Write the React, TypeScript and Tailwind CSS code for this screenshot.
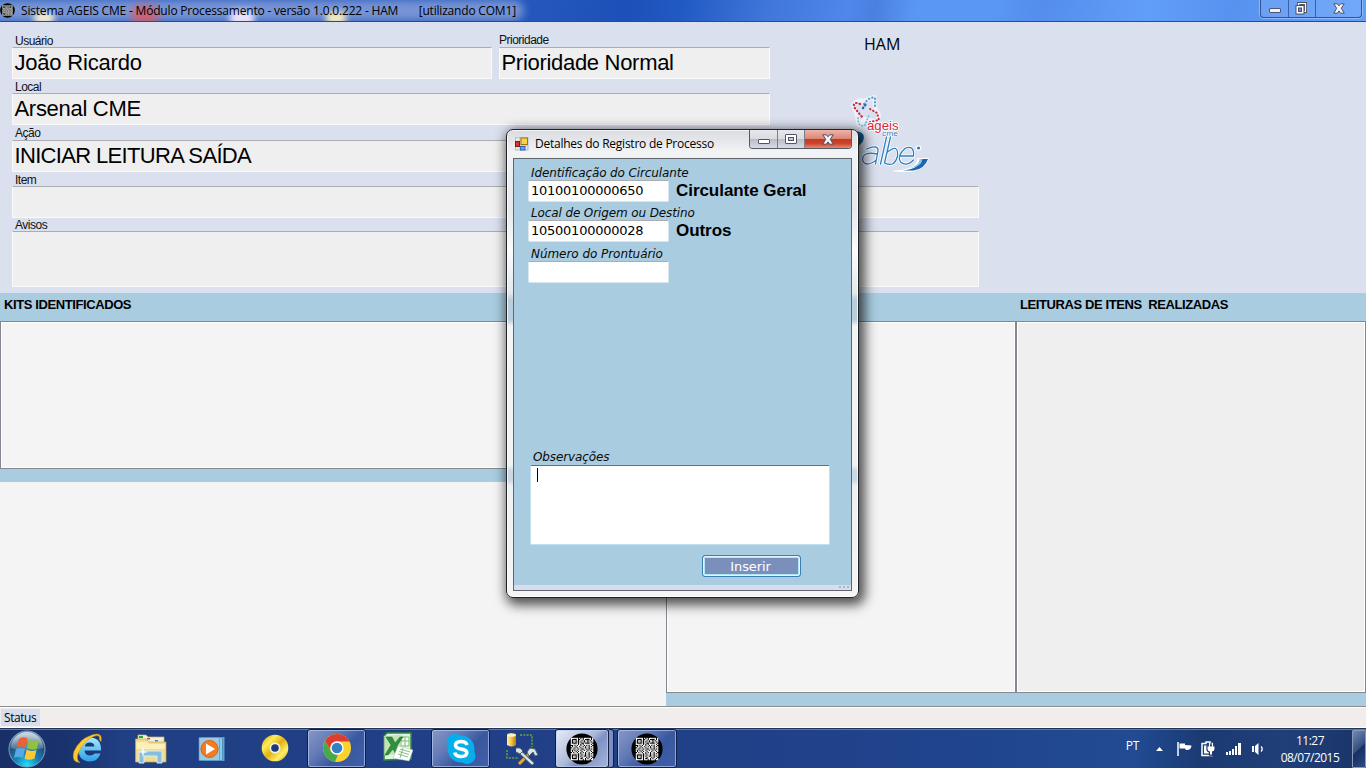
import React from "react";

const QR_ROWS = [
  "1111110101011111101",
  "1000010011010000101",
  "1011010110101101011",
  "1011010101101101101",
  "1000010110010000110",
  "1111110101011111101",
  "0010101101101010110",
  "1011011011010110101",
  "0110101101110110111",
  "1101110110011010101",
  "1010101101101101011",
  "1011010110111011101",
  "0101101101010110110",
  "1111110101110110101",
  "1000010110110110111",
  "1011010101100110101",
  "1011010110111010110",
  "1000010100110101101",
  "1111110111010111011",
];

function QrIcon({ className }: { className: string }) {
  return (
    <svg viewBox="0 0 32 32" className={className}>
      <circle cx="16" cy="16" r="15.6" fill="#000" />
      {QR_ROWS.map((row, y) =>
        row.split("").map((c, x) =>
          c === "1" ? <rect key={`${x}-${y}`} x={4.8 + x * 1.18} y={4.8 + y * 1.18} width="1.25" height="1.25" fill="#fff" /> : null,
        ),
      )}
    </svg>
  );
}

type FieldProps = { label: string; value?: string; className: string; boxClass?: string; valueClass?: string; labelClass?: string };

function Field({ label, value, className, boxClass = "h-8", valueClass = "", labelClass = "pt-px pl-[3px]" }: FieldProps) {
  return (
    <div className={`flex flex-col ${className}`}>
      <div className={`h-[13px] font-['Liberation_Sans'] text-[12px] leading-[13px] tracking-[-0.5px] text-[#111] ${labelClass}`}>{label}</div>
      <div className={`flex items-center rounded-[1px] border border-[#fafafc] border-t-[#abadb3] bg-[#efefef] pl-[1.5px] font-['Liberation_Sans'] text-[22px] leading-none text-black ${boxClass}`}>
        <span className={valueClass}>{value}</span>
      </div>
    </div>
  );
}

function CloseGlyph({ className }: { className: string }) {
  return (
    <svg viewBox="0 0 12 11" className={className}>
      <path d="M.8 .8H4.300L6 2.800 7.700 .8H11.200L8.300 5.300 11.200 10.200H7.700L6 7.900 4.300 10.200H.8L3.700 5.300Z" fill="#f4f4f6" stroke="#4b5064" strokeWidth="1" />
    </svg>
  );
}

function TitleBar() {
  return (
    <header className="relative flex h-[22px] shrink-0 justify-between overflow-hidden border-b border-[#2f4a86] bg-[linear-gradient(100deg,#2f5fc0_0,#2456bb_40%,#1d50b8_46%,#225ac4_50%,#3f76d8_56%,#4f88ea_62%,#4a80e0_64%,#5a97f5_67%,#5a96f4_73%,#548ded_76%,#619ef9_84%,#5792f0_90%,#639ff8_100%)]">
      <div className="absolute -left-2 top-0 h-[21px] w-[532px] rounded-r-full bg-[#8aa3dc] opacity-80 blur-[4px]" />
      <div className="absolute left-[34px] top-[12px] h-3 w-5 rounded bg-[#f5edd2] blur-[3px]" />
      <div className="absolute left-[131px] top-[5px] h-5 w-7 rounded-full bg-[#e05a5e] opacity-80 blur-[4px]" />
      <div className="absolute left-[230px] top-[10px] h-4 w-6 rounded bg-[#e8e2f8] blur-[3px]" />
      <div className="absolute left-[326px] top-[12px] h-3 w-5 rounded bg-[#f7efbf] blur-[3px]" />
      <div className="relative flex items-center">
        <QrIcon className="size-[15px]" />
        <span className="ml-[6px] whitespace-pre font-['Open_Sans'] text-[12px] leading-5 tracking-[-0.19px] text-black">Sistema AGEIS CME - Módulo Processamento - versão 1.0.0.222 - HAM</span>
        <span className="ml-[20.5px] whitespace-pre font-['Open_Sans'] text-[12px] leading-5 tracking-[-0.19px] text-black">[utilizando COM1]</span>
      </div>
      <div className="relative mr-[4px] flex h-[18px] w-[102px] rounded-b-[4px] border border-t-0 border-[#33548f] bg-white/10 shadow-[0_0_0_1px_rgba(190,215,255,.5)]">
        <div className="flex w-[28px] items-end justify-center border-r border-[#3a62ab] pb-[4px]">
          <div className="h-[5px] w-[12px] rounded-[1px] border border-[#4c5573] bg-[#f1f1f5]" />
        </div>
        <div className="flex w-[27px] justify-center border-r border-[#3a62ab] pr-[2px] pt-[1.5px]">
          <svg viewBox="0 0 12 13" className="h-[13px] w-[12px]">
            <path d="M3.500 1.500H10.500V9.500H3.500Z" fill="none" stroke="#4b5064" strokeWidth="3" />
            <path d="M3.500 1.500H10.500V9.500H3.500Z" fill="none" stroke="#fff" strokeWidth="1.200" />
            <rect x="1" y="3.500" width="8" height="8.500" fill="#fff" stroke="#4b5064" />
            <rect x="3.500" y="6" width="3" height="3.500" fill="#5d91e8" stroke="#4b5064" />
          </svg>
        </div>
        <div className="flex flex-1 justify-center pt-[2.5px]">
          <CloseGlyph className="h-[11px] w-[12px]" />
        </div>
      </div>
    </header>
  );
}

function BrandLogo() {
  return (
    <svg viewBox="0 0 86 78" className="h-[78px] w-[86px]">
      <g fill="none" stroke="#fff" strokeWidth="4.500" strokeLinejoin="round" opacity=".55">
        <path d="M7 10Q12 4 18 6L28 2 29 13 33 20 31 27 19 24 13 30 11 20Z" />
      </g>
      <g fill="none" strokeLinecap="round">
        <path d="M14 9Q7 6 8 12L15 21 18 23" stroke="#d4283a" strokeWidth="2.200" strokeDasharray=".5 3" />
        <path d="M18 9Q24 1 29 3V11" stroke="#4f9cce" strokeWidth="2" strokeDasharray=".5 3" />
        <path d="M24 14L31 18 33 25 24 27" stroke="#d4283a" strokeWidth="2" strokeDasharray=".5 3" />
        <path d="M12 23Q12 33 19 30L23 20" stroke="#7bbbdc" strokeWidth="1.800" strokeDasharray=".5 2.600" />
        <path d="M17 13L20 9" stroke="#2c62ac" strokeWidth="2.400" strokeDasharray=".5 3" />
      </g>
      <text x="21" y="34.500" fontFamily="Liberation Sans" fontSize="12" textLength="31.500" lengthAdjust="spacingAndGlyphs" fill="#d4283a" stroke="#fff" strokeWidth="1.600" paintOrder="stroke">ageis</text>
      <text x="36" y="41" fontFamily="Liberation Sans" fontSize="6.500" textLength="16" lengthAdjust="spacingAndGlyphs" fill="#3f77b8" stroke="#fff" strokeWidth="1" paintOrder="stroke">cme</text>
      <g transform="translate(2.5 -1)">
        <path d="M6 37Q19 38 14 48L8 54" fill="#145c9c" />
        <g fill="none" strokeLinecap="round">
          <g stroke="#fff" strokeWidth="3">
            <path d="M18 55Q30 50 29.500 57L27 70M29 60Q14 57 14 66Q17 74 28 66M38 43L32 70M42 43L36 69Q46 74 49 62Q50 49 39 58M52 62H65Q66 51 57 54Q48 62 52 68Q58 73 65 66" />
          </g>
          <g stroke="#2d7fc0" strokeWidth="1.300">
            <path d="M18 55Q30 50 29.500 57L27 70M29 60Q14 57 14 66Q17 74 28 66M38 43L32 70M42 43L36 69Q46 74 49 62Q50 49 39 58M52 62H65Q66 51 57 54Q48 62 52 68Q58 73 65 66" />
          </g>
        </g>
        <circle cx="70" cy="54" r="2.800" fill="#fff" />
        <circle cx="70" cy="54" r="1.500" fill="#2873b8" />
        <path d="M45 76.500Q68 76 69 64H80.500Q76 78 57 78L45 77.500Z" fill="#fff" />
        <path d="M54 76.500Q71 75 73 65H79.500Q76 75 65 76.500Z" fill="#1b64ae" />
        <path d="M62 74Q71 71 71 65H74Q73 73 62 74" fill="#8fc4e6" />
      </g>
    </svg>
  );
}

function Dialog() {
  return (
    <section className="absolute left-[506px] top-[129px] flex h-[469px] w-[353px] flex-col rounded-[7px] border border-[#202226] bg-[linear-gradient(180deg,#d9dbe0_0,#f2f3f5_22px,#e6e8eb_80px,#fbfbfc_120px,#e4e8ec_163px,#b9cddd_170px,#b9cddd_190px,#f3f4f4_196px,#f1f3f3_335px,#c9d8e2_341px,#c9d8e2_350px,#eef1f1_356px,#f4f5f4_100%)] px-[6px] pb-[6px] shadow-[inset_0_0_0_1px_rgba(255,255,255,.75),3px_4px_12px_3px_rgba(0,0,0,.68)]">
      <div className="flex h-[28px] shrink-0 justify-between pl-[2px]">
        <div className="flex h-[28px] items-center">
          <svg viewBox="0 0 14 14" className="size-[14px]">
            <rect x=".5" y=".5" width="12.500" height="12.500" fill="#e5e8ee" stroke="#b7bdc9" />
            <path d="M5 1V13M1 9H13" stroke="#b7bdc9" />
            <rect x=".5" y="4.500" width="4" height="5" fill="#d3352b" stroke="#8e1914" />
            <rect x="6" y="1" width="6.500" height="6.500" fill="#fbd34b" stroke="#a27409" />
            <rect x="5.500" y="9.500" width="4.500" height="3.500" fill="#67a0ef" stroke="#3065b9" />
          </svg>
          <span className="ml-[6px] whitespace-nowrap font-['Open_Sans'] text-[12px] leading-5 tracking-[-0.24px] text-black">Detalhes do Registro de Processo</span>
        </div>
        <div className="flex h-[19px] w-[103px] overflow-hidden rounded-b-[4px] border border-t-0 border-[#565a65]">
          <div className="flex w-[28px] items-center justify-center border-r border-[#7b7f8a] bg-[linear-gradient(180deg,#e7e8ec_0,#d9dbe0_48%,#b9bcc4_50%,#dadce2_100%)] pt-[5px]">
            <div className="h-[5px] w-[12px] rounded-[1px] border border-[#505466] bg-white" />
          </div>
          <div className="flex w-[27px] items-center justify-center border-r border-[#7b7f8a] bg-[linear-gradient(180deg,#e7e8ec_0,#d9dbe0_48%,#b9bcc4_50%,#dadce2_100%)]">
            <div className="flex h-[10px] w-[12px] items-center justify-center rounded-[1px] border border-[#505466] bg-white">
              <div className="h-[4px] w-[6px] border border-[#505466] bg-[#c8cad0]" />
            </div>
          </div>
          <div className="flex flex-1 items-center justify-center bg-[linear-gradient(180deg,#eeb3a8_0,#dd8677_48%,#c43820_50%,#cc452c_75%,#e48b73_100%)]">
            <CloseGlyph className="h-[11px] w-[12px]" />
          </div>
        </div>
      </div>
      <div className="flex flex-1 flex-col border border-[#60666e] bg-[#a9cce0]">
        <div className="flex flex-1 flex-col pl-[14px] font-['DejaVu_Sans']">
          <div className="mt-[5px] h-[16px] pl-[3px] text-[12px] italic leading-[18px] tracking-[-0.12px] text-[#0b0b0b]">Identificação do Circulante</div>
          <div className="flex items-center">
            <div className="flex h-[22px] w-[141px] items-center rounded-[2px] border border-[#d9e6f0] border-t-[#abadb3] bg-white pl-[2px] text-[13px] tracking-[-0.25px] text-black">10100100000650</div>
            <strong className="ml-[7px] font-['Liberation_Sans'] text-[17px] leading-5 tracking-[-0.05px] text-black">Circulante Geral</strong>
          </div>
          <div className="mt-[2px] h-[16px] pl-[3px] text-[12px] italic leading-[18px] tracking-[-0.12px] text-[#0b0b0b]">Local de Origem ou Destino</div>
          <div className="flex items-center">
            <div className="flex h-[22px] w-[141px] items-center rounded-[2px] border border-[#d9e6f0] border-t-[#abadb3] bg-white pl-[2px] text-[13px] tracking-[-0.25px] text-black">10500100000028</div>
            <strong className="ml-[7px] font-['Liberation_Sans'] text-[17px] leading-5 tracking-[-0.05px] text-black">Outros</strong>
          </div>
          <div className="mt-[3px] h-[16px] pl-[3px] text-[12px] italic leading-[18px] tracking-[-0.05px] text-[#0b0b0b]">Número do Prontuário</div>
          <div className="h-[22px] w-[141px] rounded-[2px] border border-[#d9e6f0] border-t-[#abadb3] bg-white" />
          <div className="mt-auto h-[17px] pl-[5px] text-[12px] italic leading-[18px] tracking-[-0.12px] text-[#0b0b0b]">Observações</div>
          <div className="ml-[2px] h-[80px] w-[300px] rounded-[2px] border border-[#c2dff0] border-t-[#3d7bad] bg-white pl-[6px] pt-[2px]">
            <div className="h-[14px] w-px bg-black" />
          </div>
          <div className="mb-[8px] ml-[174px] mt-[10px] flex h-[22px] w-[99px] items-center justify-center rounded-[3px] border border-[#3c7fb1] bg-[#7b8fbc] pr-[2px] pt-[2px] text-[13px] tracking-[-0.1px] text-white shadow-[inset_0_0_0_1px_#e2f5ff,inset_0_0_0_2px_#b4e4f8]">Inserir</div>
        </div>
        <div className="flex h-[5px] justify-end gap-[2px] bg-[#d7dded] pr-[2px] pt-[1px]">
          <i className="size-[2px] bg-[#b3b5bb]" />
          <i className="size-[2px] bg-[#b3b5bb]" />
          <i className="size-[2px] bg-[#b3b5bb]" />
        </div>
      </div>
    </section>
  );
}

function StartOrb() {
  return (
    <svg viewBox="0 0 38 38" className="size-[38px]">
      <defs>
        <radialGradient id="orb" cx=".5" cy=".95" r=".85">
          <stop offset="0" stopColor="#20e2ff" />
          <stop offset=".4" stopColor="#1482b5" />
          <stop offset=".75" stopColor="#234f78" />
          <stop offset="1" stopColor="#6e8eb0" />
        </radialGradient>
        <linearGradient id="shine" x2="0" y2="1">
          <stop stopColor="#fff" stopOpacity=".65" />
          <stop offset="1" stopColor="#fff" stopOpacity=".15" />
        </linearGradient>
      </defs>
      <circle cx="19" cy="19" r="18" fill="url(#orb)" stroke="#7e9fbe" />
      <path d="M3 18A16 16 0 0 1 35 18Q19 24 3 18Z" fill="url(#shine)" />
      <path d="M11 9Q15 6 19.500 8.500L17.500 17.500Q13 15.500 8.500 17.500Z" fill="#ee6133" />
      <path d="M21 9.500Q26 12 31 9.500L29 18.500Q24 20.500 19 18Z" fill="#8fc33f" />
      <path d="M8 19Q12.500 17 17 19L15 28Q10.500 26 6 28Z" fill="#56a9e6" />
      <path d="M18.500 19.800Q23 22 28.500 20L26.500 28.500Q21 31 16.500 28.800Z" fill="#fcc934" />
    </svg>
  );
}

function IeIcon() {
  return (
    <svg viewBox="0 0 32 32" className="mb-[2px] size-[32px]">
      <defs>
        <linearGradient id="ie" x2="0" y2="1"><stop stopColor="#a6e8ff" /><stop offset="1" stopColor="#2ba0e6" /></linearGradient>
      </defs>
      <path d="M29 18.500H12.500Q13 23.500 18 23.500 21.500 23.500 22.500 21.500H28.500Q26 29.500 17.500 29.500 6.500 29 6.500 17.500 7 6 18 5.500 29.500 6 29 18.500ZM12.700 14.500H22.500Q22 10.500 17.700 10.500 13.500 10.500 12.700 14.500Z" fill="url(#ie)" />
      <path d="M29 9.500Q31 -.5 20 3 7.500 7 2 19.500 -1 30.500 8 30.500 3.500 28 6.500 20.500 11.500 9 21.500 4.500 28.500 1.500 27.500 8Z" fill="#fcc931" stroke="#d9960b" strokeWidth=".5" />
    </svg>
  );
}

function ExplorerIcon() {
  return (
    <svg viewBox="0 0 34 30" className="h-[30px] w-[34px]">
      <path d="M4 1H12L14 3H30V9H4Z" fill="#f5efd1" stroke="#cfb668" strokeWidth=".7" />
      <path d="M5 2H9V4H5Z" fill="#26a72c" /><path d="M13 4H16V5.500H13Z" fill="#d94a2e" /><path d="M21 6H24V7.500H21Z" fill="#2b8be0" />
      <path d="M1.500 5H12L15 8H32V28H1.500Z" fill="#f2dc8b" stroke="#c9a74d" strokeWidth=".7" />
      <path d="M2.500 8H13L15 10H31V15H2.500Z" fill="#fbf0b9" />
      <path d="M5 29V18Q5 17 6 17H27Q28 17 28 18V29H23V22H10V29Z" fill="#86bedd" stroke="#d4edfa" />
      <path d="M9 12L10 17 14 18 10 19 9 24 8 19 4 18 8 17Z" fill="#fff" opacity=".9" />
    </svg>
  );
}

function MediaIcon() {
  return (
    <svg viewBox="0 0 28 26" className="h-[26px] w-[28px]">
      <path d="M5 1H26.500V25H5Z" fill="#5ba8d2" />
      <path d="M3 1.500H24.500V24.500H3Z" fill="#8dc8e6" stroke="#347fb0" strokeWidth=".6" />
      <path d="M1 1.500H21.500V24.500H1Z" fill="#9ac9e5" stroke="#4b8eb8" strokeWidth=".6" />
      <circle cx="11.500" cy="13" r="8.500" fill="#f47c20" stroke="#e35d0c" />
      <path d="M8 7.500L17 13 8 18.500Z" fill="#fff" />
    </svg>
  );
}

function DiscIcon() {
  return (
    <svg viewBox="0 0 28 28" className="mb-[2px] size-[28px]">
      <defs><linearGradient id="disc" x2="1" y2="1"><stop stopColor="#c99a08" /><stop offset=".28" stopColor="#ffec5b" /><stop offset=".5" stopColor="#e0b111" /><stop offset=".75" stopColor="#fff069" /><stop offset="1" stopColor="#bd8e06" /></linearGradient></defs>
      <circle cx="14" cy="14" r="13.300" fill="url(#disc)" />
      <circle cx="14" cy="14" r="5.500" fill="#f4f2da" />
      <circle cx="14" cy="14" r="3.800" fill="#1d397b" />
    </svg>
  );
}

function ChromeIcon() {
  return (
    <svg viewBox="0 0 30 30" className="mb-px size-[30px]">
      <circle cx="15" cy="15" r="14" fill="#fbd32e" />
      <path d="M3 8A14 14 0 0 1 27.500 8.500H15A6.500 6.500 0 0 0 9 18Z" fill="#de3c30" />
      <path d="M3 8L9 18.500Q11.500 22 16 21.500L13 29A14 14 0 0 1 3 8Z" fill="#48a94c" />
      <circle cx="15" cy="15" r="6.700" fill="#fff" />
      <circle cx="15" cy="15" r="5.300" fill="#347fc8" />
    </svg>
  );
}

function ExcelIcon() {
  return (
    <svg viewBox="0 0 30 30" className="mb-[3px] size-[30px]">
      <path d="M4 1H28V27L1 28V4Z" fill="#e1f2df" stroke="#2b8d39" strokeWidth="1.500" />
      <path d="M18 5H26V14H18ZM18 9H26M22 5V14" fill="#f7fcf5" stroke="#7cba76" />
      <path d="M1 4L18 3V22L1 23Z" fill="#b8dca9" opacity=".7" />
      <path d="M3 5H9L12 11 17 5H20L14 14 19 23H13L10 17 5 23H2L8 13Z" fill="#2d923b" stroke="#196827" strokeWidth=".5" />
      <path d="M15 14L30 18 26 29 10 26Z" fill="#fff" stroke="#a8cdae" strokeWidth=".5" />
      <path d="M17 17L27 20M16 19.500L26 22.500M15 22L25 25M20 16L17 26" stroke="#69ab75" strokeWidth=".8" />
    </svg>
  );
}

function SkypeIcon() {
  return (
    <svg viewBox="0 0 32 32" className="size-[32px]">
      <circle cx="10" cy="9.500" r="8.500" fill="#00aff0" />
      <circle cx="22" cy="22.500" r="8.500" fill="#00aff0" />
      <circle cx="16" cy="16" r="13.500" fill="#08aeea" />
      <path d="M22 12Q21 8.500 16 8.500 10.500 8.700 10.500 12.300 10.700 15 16 16 22 17 21.800 20 21.500 23.500 16 23.500 10.500 23.500 9.800 19.500" fill="none" stroke="#fff" strokeWidth="3.600" />
    </svg>
  );
}

function DbToolsIcon() {
  return (
    <svg viewBox="0 0 34 34" className="size-[34px]">
      <defs><linearGradient id="cyl"><stop stopColor="#fff3ae" /><stop offset=".45" stopColor="#f6c84a" /><stop offset="1" stopColor="#b97b08" /></linearGradient></defs>
      <path d="M2 3Q6.500 0 11 3V13Q6.500 16 2 13Z" fill="url(#cyl)" />
      <ellipse cx="6.500" cy="3" rx="4.500" ry="1.800" fill="#fff2b8" />
      <path d="M15 3H27V15M2 18V26H14" fill="none" stroke="#5aae32" strokeWidth="1.500" strokeDasharray="2 1.300" />
      <path d="M14 32L26 20" stroke="#efa528" strokeWidth="3" />
      <path d="M13 18L28 32" stroke="#526270" strokeWidth="4" />
      <path d="M13 18L28 32" stroke="#dce7ed" strokeWidth="2.300" />
      <path d="M11 16L15 16 18 19 15 22 11 20M22 20L25 16 30 17 33 23 30 24 28 20 24 24Z" fill="#dbe4e9" stroke="#53616d" />
    </svg>
  );
}

function TaskButton({ children, className, active = false }: { children: React.ReactNode; className: string; active?: boolean }) {
  return (
    <div className={`flex h-[39px] shrink-0 items-center justify-center rounded-[3px] border border-[#111d42] shadow-[inset_0_0_0_1px_rgba(190,207,242,.65)] ${active ? "bg-[linear-gradient(135deg,#e8ecf7_0,#abb9da_48%,#7f92c5_60%,#a7b4d9_100%)]" : "bg-[linear-gradient(135deg,#8797c3_0,#617ab7_35%,#3a589f_60%,#405faa_100%)]"} ${className}`}>
      {children}
    </div>
  );
}

function Taskbar() {
  return (
    <footer className="flex h-[40px] shrink-0 items-center justify-between border-t border-[#203459] bg-[linear-gradient(90deg,#192f68_0,#19336e_5%,#203f85_9%,#204087_50%,#20448e_70%,#214b93_83%,#1b3a72_88%,#203f79_94%,#193468_100%)] shadow-[inset_0_1px_0_#66779b]">
      <div className="flex h-full items-center">
        <div className="ml-[8px] flex w-[64px]"><StartOrb /></div>
        <div className="flex w-[62px]"><IeIcon /></div>
        <div className="flex w-[64px]"><ExplorerIcon /></div>
        <div className="flex w-[63px]"><MediaIcon /></div>
        <div className="flex w-[46px]"><DiscIcon /></div>
        <TaskButton className="w-[59px]"><ChromeIcon /></TaskButton>
        <div className="ml-[17px] flex w-[48px]"><ExcelIcon /></div>
        <TaskButton className="w-[59px]"><SkypeIcon /></TaskButton>
        <div className="ml-[15px] flex w-[50px]"><DbToolsIcon /></div>
        <TaskButton active className="w-[54px]"><QrIcon className="size-[32px]" /></TaskButton>
        <div className="h-[39px] w-[5px] rounded-r-[3px] border border-l-0 border-[#111d42] bg-[#7c8fc0]" />
        <TaskButton className="ml-[3px] w-[60px]"><QrIcon className="size-[32px]" /></TaskButton>
      </div>
      <div className="flex h-full items-center text-white">
        <span className="mr-[17px] pb-[5px] font-['Open_Sans'] text-[12px] tracking-[-0.3px]">PT</span>
        <svg viewBox="0 0 7 4" className="mr-[14px] mt-[1px] h-[4px] w-[7px]"><path d="M0 4L3.500 0 7 4Z" fill="#fff" /></svg>
        <svg viewBox="0 0 16 16" className="mr-[7px] size-4"><path d="M1 1V15" stroke="#fff" strokeWidth="1.500" /><path d="M2.500 2.500H8V4L14.500 4.500Q14 9.500 9 9L8 7.500H2.500Z" fill="#fff" /></svg>
        <svg viewBox="0 0 16 17" className="mr-[10px] h-[17px] w-4">
          <path d="M3 3.500H6V2H10V3.500H12V15.500H2V3.500Z" fill="#203c72" stroke="#fff" strokeWidth="1.500" />
          <path d="M4 5.500H9V13.500H4Z" fill="#fff" />
          <path d="M7.500 6.500H14.500V9Q14.500 11 12 11.500V14.500H10V11.500Q7.500 11 7.500 9ZM9.500 3V7M12.500 3V7" fill="#fff" stroke="#1c3569" strokeWidth="2.300" />
          <path d="M7.500 6.500H14.500V9Q14.500 11 12 11.500V14.500H10V11.500Q7.500 11 7.500 9Z" fill="#fff" />
          <path d="M9.500 3V7M12.500 3V7" stroke="#fff" strokeWidth="1.200" />
        </svg>
        <svg viewBox="0 0 15 12" className="mr-[11px] h-[12px] w-[15px]" fill="#fff"><path d="M0 9H2V12H0ZM3 8H5V12H3ZM6 6H8V12H6ZM9 3H11V12H9ZM12 0H15V12H12Z" /></svg>
        <svg viewBox="0 0 13 14" className="mr-[15px] h-[14px] w-[13px]"><path d="M0 4H2V10H0ZM3 4L6.500 1V13L3 10Z" fill="#fff" /><path d="M9 4.500Q11.500 7 9 9.500" fill="none" stroke="#fff" strokeWidth="1.300" /></svg>
        <div className="mr-[12px] flex w-[60px] flex-col items-center font-['Open_Sans'] text-[12px] leading-[17px] tracking-[-0.5px]">
          <span>11:27</span>
          <span>08/07/2015</span>
        </div>
        <div className="h-[38px] w-[14px] rounded-[1px] border border-[#8799b7] bg-[linear-gradient(135deg,#738bb1_0,#344f83_48%,#172f63_52%,#2c4a82_100%)]" />
      </div>
    </footer>
  );
}

export default function App() {
  return (
    <div className="relative flex h-[768px] w-[1366px] flex-col overflow-hidden bg-[#f4f4f4]">
      <TitleBar />
      <main className="flex h-[271px] shrink-0 bg-[#dae0ee]">
        <div className="flex w-[980px] shrink-0 flex-col pl-[12px] pt-[12px]">
          <div className="flex gap-[7px]">
            <Field label="Usuário" value="João Ricardo" className="w-[480px]" valueClass="tracking-[-0.2px]" />
            <Field label="Prioridade" value="Prioridade Normal" className="w-[271px]" valueClass="tracking-[-0.3px]" labelClass="-ml-px pl-px" />
          </div>
          <Field label="Local" value="Arsenal CME" className="mt-px w-[758px]" valueClass="tracking-[-0.3px]" />
          <Field label="Ação" value="INICIAR LEITURA SAÍDA" className="mt-[2px] w-[758px]" valueClass="tracking-[-0.67px]" labelClass="pl-[3px]" />
          <Field label="Item" className="mt-px w-[967px]" />
          <Field label="Avisos" className="w-[967px]" boxClass="h-[56px]" />
        </div>
        <div className="-ml-[116px] flex w-[110px] flex-col pt-[12px]">
          <div className="h-5 font-['Open_Sans'] text-[16px] leading-5 text-black">HAM</div>
          <div className="-ml-[18px] mt-[41px]"><BrandLogo /></div>
        </div>
      </main>
      <div className="flex h-[28px] shrink-0 items-start bg-[#a9cce0] pt-[4px] font-['Liberation_Sans'] text-[13px] font-bold leading-4 text-black">
        <div className="w-[1016px] pl-[4px] tracking-[-0.4px]">KITS IDENTIFICADOS</div>
        <div className="whitespace-pre pl-[4px] tracking-[-0.4px]">LEITURAS DE ITENS  REALIZADAS</div>
      </div>
      <div className="flex h-[385px] shrink-0">
        <div className="flex w-[666px] flex-col">
          <div className="h-[148px] border border-[#828790] bg-[#f4f4f4] shadow-[inset_0_0_0_1px_#fff]" />
          <div className="h-[13px] bg-[#a9cce0]" />
          <div className="flex-1 bg-[#f4f4f4]" />
        </div>
        <div className="flex w-[700px] flex-col bg-[#a9cce0]">
          <div className="flex h-[372px]">
            <div className="w-[350px] border border-[#828790] bg-[#f4f4f4] shadow-[inset_0_0_0_1px_#fff]" />
            <div className="w-[350px] border border-[#828790] bg-[#efefef] shadow-[inset_0_0_0_1px_#fff]" />
          </div>
        </div>
      </div>
      <div className="flex h-[22px] shrink-0 items-center border-y border-b-white border-t-[#8b8d8e] bg-[#f0edec] pl-px pt-px shadow-[inset_0_1px_0_#fff]">
        <div className="flex h-[17px] w-[39px] items-center bg-[#d7dded] pl-[3px] font-['Open_Sans'] text-[12px] tracking-[-0.45px] text-black">Status</div>
      </div>
      <Taskbar />
      <Dialog />
    </div>
  );
}
